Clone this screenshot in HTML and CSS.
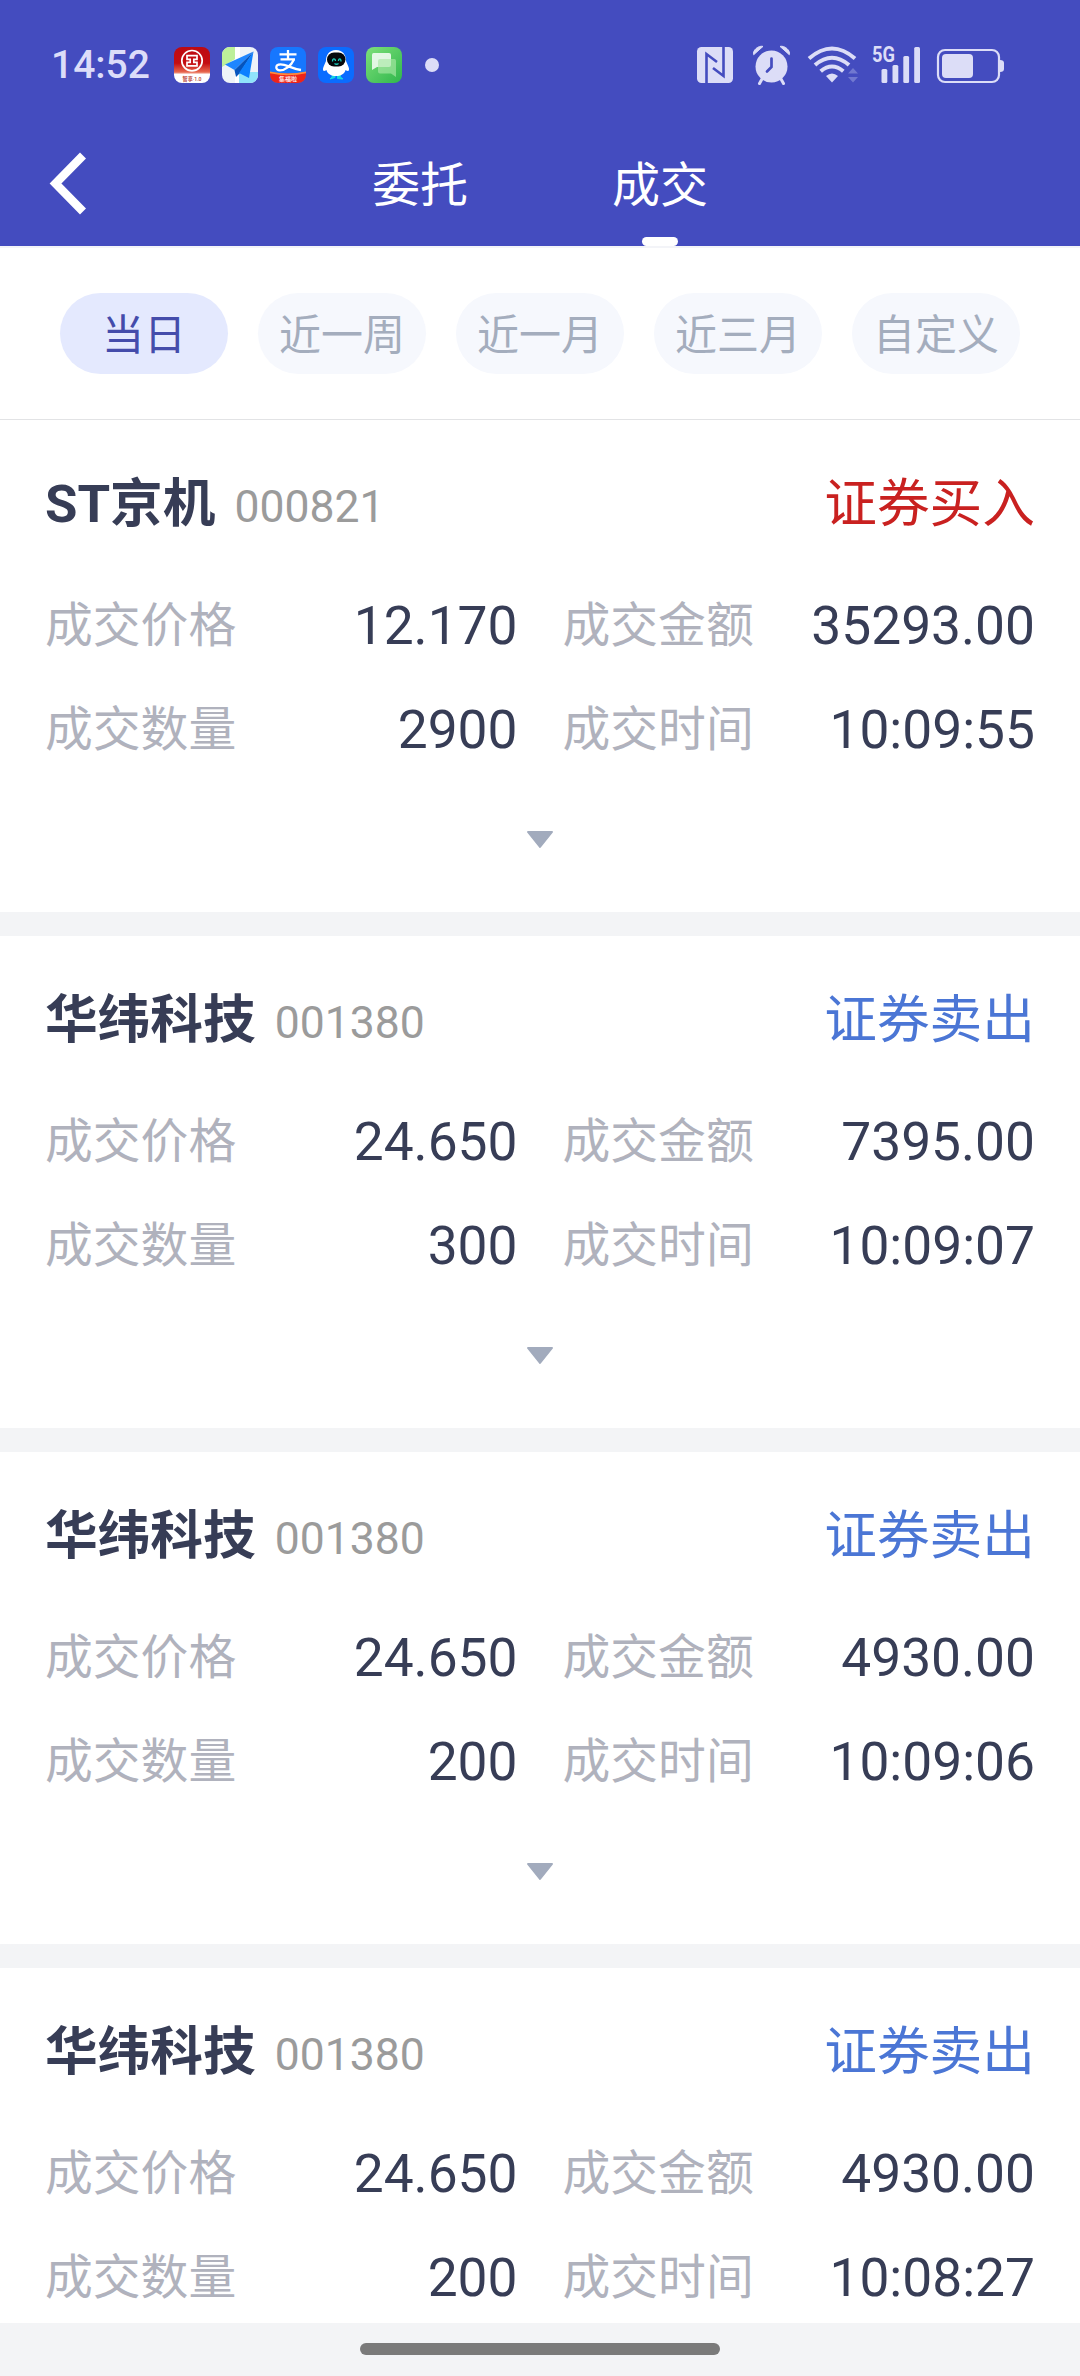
FILE: index.html
```
<!DOCTYPE html>
<html lang="zh-CN">
<head>
<meta charset="utf-8">
<title>成交</title>
<link rel="stylesheet" href="styles.css">
</head>
<body>
<div class="screen">
  <header class="header">
    <div class="status">
      <span class="clock">14:52</span>
      <div class="apps">
        <svg class="app" viewBox="0 0 36 36">
          <defs>
            <linearGradient id="bank" x1="0" y1="0" x2="0" y2="1"><stop offset="0" stop-color="#bd0a12"/><stop offset=".45" stop-color="#c40d12"/><stop offset=".7" stop-color="#e8694f"/><stop offset=".76" stop-color="#fff"/></linearGradient>
          </defs>
          <rect width="36" height="36" rx="8" fill="url(#bank)"/>
          <circle cx="18" cy="13.7" r="10.2" fill="none" stroke="#fff" stroke-width="1.7"/>
          <path d="M13 8.700h10v3.600h-3.200v3h3.200v3.600H13v-3.600h3.200v-3H13z" fill="none" stroke="#fff" stroke-width="1.700"/>
          <text x="18" y="33.700" class="tiny" fill="#b5382c" textLength="19" lengthAdjust="spacingAndGlyphs">智享·1.0</text>
        </svg>
        <svg class="app" viewBox="0 0 36 36">
          <clipPath id="r"><rect width="36" height="36" rx="8"/></clipPath>
          <g clip-path="url(#r)">
            <rect width="36" height="36" fill="#eef3f8"/>
            <path d="M0 0h13v12L0 20z" fill="#bdf09a"/>
            <path d="M13 0h5v36h-5z" fill="#fff"/><path d="M17 25h19v11H17z" fill="#8fe3fb"/>
            <path d="M31.500 4.500L3 17.500l9.500 5.500z" fill="#1e86ff"/>
            <path d="M31.500 4.500L12.500 23l1.500 7 4-4z" fill="#0554bd"/>
            <path d="M31.500 4.500L17 26l10 5z" fill="#0d80ff"/>
          </g>
        </svg>
        <svg class="app" viewBox="0 0 36 36">
          <g clip-path="url(#r)">
            <rect width="36" height="36" fill="#1677ff"/>
            <path d="M0 25q18 3 36 0v11H0z" fill="#ee2419"/>
            <path d="M0 24.500q18 4 36 0v1.700q-18 4-36 0z" fill="#ff8c3c"/>
            <path d="M9.500 7.300h17M18 3v8.500M10.500 12.300h14.500M24 12.500C21 19 15 23.300 10 23.300c-5 0-5-6 .5-6 6 0 11 4.500 20.500 5.700" fill="none" stroke="#fff" stroke-width="2.300"/>
            <text x="18" y="33.600" class="tiny" fill="#fff" textLength="18" lengthAdjust="spacingAndGlyphs">集福啦</text>
          </g>
        </svg>
        <svg class="app" viewBox="0 0 36 36">
          <rect width="36" height="36" rx="8" fill="#0a6cff"/>
          <path d="M14 27h3v3.500l-5 1.500q1-1.500 2.300-1.800zM19.500 27h3l-.3 3.200q2 .5 2.600 1.800l-5.300-.5z" fill="#18d9e0" stroke="#18d9e0"/>
          <path d="M18 3C11 3 8 8 8 14c-1.500 4-3.500 7-3 9s3.500 0 3.500 0c1 4 5 6 9.500 6s8.500-2 9.500-6c0 0 3 2 3.500 0s-1.500-5-3-9C28 8 25 3 18 3z" fill="#fff"/>
          <rect x="9" y="5.500" width="18.500" height="14" rx="7" fill="#05080c"/>
          <path d="M14.500 14.500c0-4 3-3 3-.5M20.500 14c0-3 2.500-3 2.500.5M16.500 16.500q2 1.500 4 0" fill="none" stroke="#19cdbb" stroke-width="1.300"/>
        </svg>
        <svg class="app" viewBox="0 0 36 36">
          <defs><linearGradient id="g" x1="0" y1="0" x2="1" y2="1"><stop offset="0" stop-color="#7ee07a"/><stop offset="1" stop-color="#2fb64c"/></linearGradient></defs>
          <rect width="36" height="36" rx="8" fill="url(#g)"/>
          <path d="M7.500 6H23a2 2 0 0 1 2 2v10a2 2 0 0 1-2 2H11l-5 3V8q0-2 1.500-2z" fill="#fff" opacity=".82"/>
          <path d="M14 12h14.500q1.500 0 1.500 2v16l-5-3.500H14q-2 0-2-2V14q0-2 2-2z" fill="#a9e8a6" opacity=".65"/>
        </svg>
      </div>
      <span class="more-dot"></span>
      <svg class="system" width="310" height="52" viewBox="696 38 310 52" fill="#dcddf7">
        <rect x="697" y="46" width="36" height="36" rx="4.500"/>
        <path d="M706.500 82V53L717 61M723.500 46v29L713 67" fill="none" stroke="#444cbf" stroke-width="2.600"/>
        <circle cx="771.500" cy="65.500" r="16"/>
        <path d="M753.700 53.700c-1.500-4 4.500-9.500 9.300-8.300zM789.300 53.700c1.500-4-4.500-9.500-9.300-8.300z" stroke="#dcddf7"/>
        <path d="M762 78l-2.500 4.500M781 78l2.500 4.500" stroke="#dcddf7" stroke-width="3" stroke-linecap="round"/>
        <path d="M771.500 57.500v8.500l-4.500 4.500" fill="none" stroke="#444cbf" stroke-width="2.700" stroke-linecap="round"/>
        <path d="M809 57.500q23-20 46 0M815 64q17-14.500 34 0M820.700 70.300q11.300-9.500 22.600 0" fill="none" stroke="#dcddf7" stroke-width="4"/>
        <path d="M826 75q6-5 12 0l-6 6.500z"/>
        <path d="M848 72.500l5-5.500 5 5.500zM848 76l5 5.500 5-5.500z" opacity=".3"/>
        <text x="872" y="61" class="net" textLength="23" lengthAdjust="spacingAndGlyphs">5G</text>
        <rect x="881.500" y="68" width="5.800" height="14" rx="1.500"/><rect x="892.500" y="64" width="5.800" height="18" rx="1.500"/><rect x="903.300" y="55" width="5.800" height="27" rx="1.500"/><rect x="914.200" y="46" width="5.800" height="36" rx="1.500"/>
        <rect x="938" y="49" width="61" height="32" rx="7" fill="none" stroke="#dcddf7" stroke-width="2.200"/>
        <rect x="942" y="53" width="31" height="24" rx="4"/>
        <path d="M1000 59q4 0 4 3v6q0 3-4 3z"/>
      </svg>
    </div>
    <nav class="nav">
      <svg class="back" viewBox="0 0 40 64"><path d="M36 4.500L8.500 32.500 36 60.500" fill="none" stroke="#fff" stroke-width="8.400"/></svg>
      <span class="tab">委托</span>
      <span class="tab active">成交</span>
    </nav>
  </header>
  <div class="filters">
    <span class="pill on">当日</span><span class="pill">近一周</span><span class="pill">近一月</span><span class="pill">近三月</span><span class="pill">自定义</span>
  </div>
  <main class="list">
    <section class="card">
      <div class="head"><b class="name">ST京机</b><span class="code">000821</span><span class="side buy">证券买入</span></div>
      <dl class="grid">
        <div class="cell"><dt>成交价格</dt><dd>12.170</dd></div><div class="cell"><dt>成交金额</dt><dd>35293.00</dd></div>
        <div class="cell"><dt>成交数量</dt><dd>2900</dd></div><div class="cell"><dt>成交时间</dt><dd>10:09:55</dd></div>
      </dl>
      <svg class="expand" viewBox="0 0 28 18"><path d="M2 1h24L14 16z"/></svg>
    </section>
    <section class="card">
      <div class="head"><b class="name">华纬科技</b><span class="code">001380</span><span class="side sell">证券卖出</span></div>
      <dl class="grid">
        <div class="cell"><dt>成交价格</dt><dd>24.650</dd></div><div class="cell"><dt>成交金额</dt><dd>7395.00</dd></div>
        <div class="cell"><dt>成交数量</dt><dd>300</dd></div><div class="cell"><dt>成交时间</dt><dd>10:09:07</dd></div>
      </dl>
      <svg class="expand" viewBox="0 0 28 18"><path d="M2 1h24L14 16z"/></svg>
    </section>
    <section class="card">
      <div class="head"><b class="name">华纬科技</b><span class="code">001380</span><span class="side sell">证券卖出</span></div>
      <dl class="grid">
        <div class="cell"><dt>成交价格</dt><dd>24.650</dd></div><div class="cell"><dt>成交金额</dt><dd>4930.00</dd></div>
        <div class="cell"><dt>成交数量</dt><dd>200</dd></div><div class="cell"><dt>成交时间</dt><dd>10:09:06</dd></div>
      </dl>
      <svg class="expand" viewBox="0 0 28 18"><path d="M2 1h24L14 16z"/></svg>
    </section>
    <section class="card">
      <div class="head"><b class="name">华纬科技</b><span class="code">001380</span><span class="side sell">证券卖出</span></div>
      <dl class="grid">
        <div class="cell"><dt>成交价格</dt><dd>24.650</dd></div><div class="cell"><dt>成交金额</dt><dd>4930.00</dd></div>
        <div class="cell"><dt>成交数量</dt><dd>200</dd></div><div class="cell"><dt>成交时间</dt><dd>10:08:27</dd></div>
      </dl>
    </section>
  </main>
  <footer class="gesture"><span class="handle"></span></footer>
</div>
</body>
</html>
```
FILE: styles.css
```
* { box-sizing: border-box; }
body { margin: 0; font-family: Roboto, "Noto Sans CJK SC", sans-serif; }
.screen { width: 1080px; height: 2376px; display: flex; flex-direction: column; overflow: hidden; background: #f3f4f6; }

.header { height: 246px; flex: none; background: #444cbf; display: flex; flex-direction: column; }
.status { height: 122px; padding: 7px 74px 0 51px; display: flex; align-items: center; }
.clock { width: 123px; font-size: 39px; font-weight: 500; line-height: 46px; color: #dcddf9; }
.apps { display: flex; gap: 12px; }
.app { width: 36px; height: 36px; display: block; }
.tiny { font-size: 6px; font-weight: 500; text-anchor: middle; }
.more-dot { width: 14px; height: 14px; border-radius: 50%; background: #dcddf7; margin-left: 23px; }
.system { display: block; margin-left: auto; }
.net { font-size: 22px; font-weight: 700; }

.nav { height: 124px; display: flex; }
.back { width: 40px; height: 64px; margin: 29px 213px 0 47px; }
.tab { width: 240px; height: 124px; line-height: 127px; font-size: 48px; color: #fff; text-align: center; position: relative; }
.active::after { content: ""; position: absolute; left: 102px; bottom: 0; width: 36px; height: 9px; border-radius: 5px; background: #fff; }

.filters { height: 174px; flex: none; display: flex; gap: 30px; padding: 45px 60px 0; background: #fff; border-top: 2px solid #f3f4f8; border-bottom: 1px solid #e2e3e5; }
.pill { width: 168px; height: 81px; line-height: 86px; border-radius: 40.5px; text-align: center; font-size: 42px; color: #a4adbd; background: #f6f8fd; }
.on { color: #444cab; background: #e4e9fe; }

.list { height: 1903px; flex: none; display: flex; flex-direction: column; gap: 24px; overflow: hidden; }
.card { height: 492px; flex: none; padding: 48px 45px 0; background: #fff; display: flex; flex-direction: column; }
.head { height: 72px; display: flex; align-items: baseline; line-height: 72px; }
.name { font-size: 52.7px; font-weight: 700; color: #373d56; }
.code { font-size: 44.5px; color: #9b9b9b; margin-left: 19px; }
.side { font-size: 52.7px; margin-left: auto; }
.buy { color: #c92120; }
.sell { color: #4b76d5; }
.grid { margin: 32px 0 0; display: grid; grid-template-columns: 1fr 1fr; column-gap: 45px; grid-auto-rows: 104px; }
.cell { display: flex; justify-content: space-between; align-items: center; line-height: 104px; }
dt { font-size: 47.8px; padding-top: 3px; color: #b0b2bd; }
dd { margin: 0; padding-top: 3px; font-size: 53.3px; color: #373d56; }
.expand { width: 28px; height: 18px; align-self: center; margin-top: 51px; fill: #a2abbd; stroke: #a2abbd; stroke-width: 2; stroke-linejoin: round; }

.gesture { height: 53px; flex: none; display: flex; justify-content: center; padding-top: 20px; background: #f3f4f6; }
.handle { width: 360px; height: 12px; border-radius: 6px; background: #7a7a7a; }
```
